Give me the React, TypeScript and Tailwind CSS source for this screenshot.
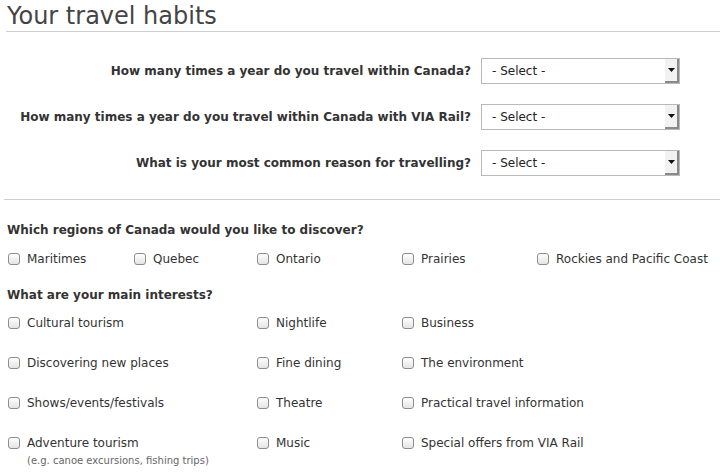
import type { ReactNode } from "react";

const questions = [
  "How many times a year do you travel within Canada?",
  "How many times a year do you travel within Canada with VIA Rail?",
  "What is your most common reason for travelling?",
];

const regions: { label: string; width: string }[] = [
  { label: "Maritimes", width: "w-[126px]" },
  { label: "Quebec", width: "w-[123px]" },
  { label: "Ontario", width: "w-[145px]" },
  { label: "Prairies", width: "w-[135px]" },
  { label: "Rockies and Pacific Coast", width: "" },
];

const interests: readonly (readonly string[])[] = [
  ["Cultural tourism", "Nightlife", "Business"],
  ["Discovering new places", "Fine dining", "The environment"],
  ["Shows/events/festivals", "Theatre", "Practical travel information"],
  ["Adventure tourism", "Music", "Special offers from VIA Rail"],
];

function Box(): JSX.Element {
  return (
    <span className="mt-[2px] inline-block h-[12px] w-[12px] shrink-0 rounded-[3px] border border-[#8d8d8d] bg-gradient-to-b from-[#ffffff] to-[#e4e4e4] shadow-[inset_0_1px_0_#fff]" />
  );
}

function Check({ children, sub }: { children: ReactNode; sub?: string }): JSX.Element {
  return (
    <label className="flex items-start gap-[7px] whitespace-nowrap">
      <Box />
      <span className="flex flex-col">
        <span className="leading-[16px]">{children}</span>
        {sub ? <span className="mt-[3px] text-[10px] leading-[13px] text-[#666]">{sub}</span> : null}
      </span>
    </label>
  );
}

function FakeSelect(): JSX.Element {
  return (
    <div className="flex h-[26px] w-[199px] shrink-0 items-stretch border border-[#b9b9b9] bg-white">
      <span className="flex flex-1 items-center pl-[10px] text-[12px] text-[#222]">- Select -</span>
      <span className="flex w-[14px] items-center justify-center border-r-2 border-b-2 border-[#8a8a8a] bg-[#f2f2f2]">
        <svg width="7" height="4" viewBox="0 0 7 4">
          <path d="M0 0h7L3.5 4z" fill="#111" />
        </svg>
      </span>
    </div>
  );
}

export default function App(): JSX.Element {
  return (
    <div className="min-h-[474px] w-[720px] bg-white pt-[1px] text-[12px] text-[#333]" style={{ fontFamily: '"DejaVu Sans", Verdana, sans-serif' }}>
      <h1 className="ml-[6px] border-b border-[#cfcfcf] pl-[1px] text-[24px] leading-[30px] text-[#444]">Your travel habits</h1>

      <div className="flex flex-col gap-[20px] pt-[26px] pr-[40px]">
        {questions.map((q) => (
          <div key={q} className="flex items-center justify-end gap-[10px]">
            <span className="whitespace-nowrap font-bold">{q}</span>
            <FakeSelect />
          </div>
        ))}
      </div>

      <div className="ml-[4px] mt-[23px] border-t border-[#cfcfcf]" />

      <div className="px-[7px] pt-[22px]">
        <h2 className="font-bold leading-[16px]">Which regions of Canada would you like to discover?</h2>
        <div className="flex pt-[13px] pl-[1px]">
          {regions.map((r) => (
            <div key={r.label} className={r.width}>
              <Check>{r.label}</Check>
            </div>
          ))}
        </div>

        <h2 className="pt-[20px] font-bold leading-[16px]">What are your main interests?</h2>
        <div className="flex flex-col gap-[24px] pt-[12px] pl-[1px]">
          {interests.map((row, i) => (
            <div key={i} className="grid grid-cols-[249px_145px_1fr]">
              {row.map((item) => (
                <Check key={item} sub={item === "Adventure tourism" ? "(e.g. canoe excursions, fishing trips)" : undefined}>
                  {item}
                </Check>
              ))}
            </div>
          ))}
        </div>
      </div>
    </div>
  );
}
